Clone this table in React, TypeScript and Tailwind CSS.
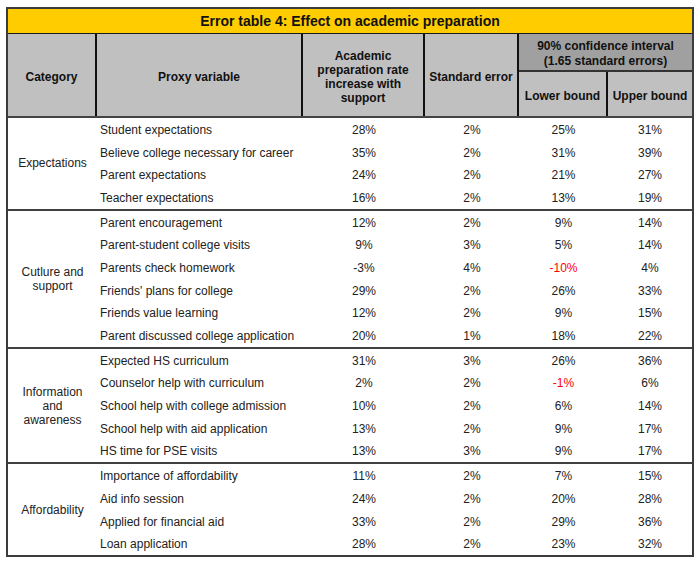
import React from "react";

type Row = { label: string; a: string; se: string; lo: string; hi: string; red?: boolean };
type Group = { cat: string; rows: Row[] };

const groups: Group[] = [
  {
    cat: "Expectations",
    rows: [
      { label: "Student expectations", a: "28%", se: "2%", lo: "25%", hi: "31%" },
      { label: "Believe college necessary for career", a: "35%", se: "2%", lo: "31%", hi: "39%" },
      { label: "Parent expectations", a: "24%", se: "2%", lo: "21%", hi: "27%" },
      { label: "Teacher expectations", a: "16%", se: "2%", lo: "13%", hi: "19%" },
    ],
  },
  {
    cat: "Cutlure and support",
    rows: [
      { label: "Parent encouragement", a: "12%", se: "2%", lo: "9%", hi: "14%" },
      { label: "Parent-student college visits", a: "9%", se: "3%", lo: "5%", hi: "14%" },
      { label: "Parents check homework", a: "-3%", se: "4%", lo: "-10%", hi: "4%", red: true },
      { label: "Friends' plans for college", a: "29%", se: "2%", lo: "26%", hi: "33%" },
      { label: "Friends value learning", a: "12%", se: "2%", lo: "9%", hi: "15%" },
      { label: "Parent discussed college application", a: "20%", se: "1%", lo: "18%", hi: "22%" },
    ],
  },
  {
    cat: "Information and awareness",
    rows: [
      { label: "Expected HS curriculum", a: "31%", se: "3%", lo: "26%", hi: "36%" },
      { label: "Counselor help with curriculum", a: "2%", se: "2%", lo: "-1%", hi: "6%", red: true },
      { label: "School help with college admission", a: "10%", se: "2%", lo: "6%", hi: "14%" },
      { label: "School help with aid application", a: "13%", se: "2%", lo: "9%", hi: "17%" },
      { label: "HS time for PSE visits", a: "13%", se: "3%", lo: "9%", hi: "17%" },
    ],
  },
  {
    cat: "Affordability",
    rows: [
      { label: "Importance of affordability", a: "11%", se: "2%", lo: "7%", hi: "15%" },
      { label: "Aid info session", a: "24%", se: "2%", lo: "20%", hi: "28%" },
      { label: "Applied for financial aid", a: "33%", se: "2%", lo: "29%", hi: "36%" },
      { label: "Loan application", a: "28%", se: "2%", lo: "23%", hi: "32%" },
    ],
  },
];

export default function App() {
  return (
    <div
      className="min-h-[562px] w-[700px] bg-white pt-[7px] pl-[6px]"
      style={{ fontFamily: '"Liberation Sans", Arial, sans-serif' }}
    >
      <div className="w-[688px] border-2 border-[#3c3c3c]">
        <div className="flex h-[25px] items-center justify-center border-b border-[#1a1a1a] bg-[#ffcc00] pt-[1px] text-[14px] font-bold text-[#111]">
          Error table 4: Effect on academic preparation
        </div>
        <div className="flex h-[84px] border-b-2 border-[#444] bg-[#c0c0c0] text-[12px] font-bold leading-[14px] text-[#111]">
          <div className="flex w-[89px] items-center justify-center border-r-2 border-[#111] pt-[4px]">Category</div>
          <div className="flex w-[206px] items-center justify-center border-r-2 border-[#111] pt-[4px]">Proxy variable</div>
          <div className="flex w-[122px] items-center justify-center border-r-2 border-[#111] px-[6px] pt-[4px] text-center">
            Academic preparation rate increase with support
          </div>
          <div className="flex w-[94px] items-center justify-center border-r-2 border-[#111] pt-[4px]">Standard error</div>
          <div className="flex w-[173px] flex-col">
            <div className="flex h-[38px] items-center justify-center border-b-2 border-[#333] bg-[#a0a0a0] pt-[4px] text-center leading-[15px]">
              90% confidence interval
              <br />
              (1.65 standard errors)
            </div>
            <div className="flex flex-1">
              <div className="flex w-[89px] items-center justify-center border-r-2 border-[#111] pt-[3px]">Lower bound</div>
              <div className="flex flex-1 items-center justify-center pt-[3px]">Upper bound</div>
            </div>
          </div>
        </div>
        {groups.map((g, gi) => (
          <div
            key={g.cat}
            className={`flex text-[12px] text-[#222] ${gi > 0 ? "border-t-2 border-[#404040]" : ""}`}
          >
            <div className="flex w-[89px] items-center justify-center px-[6px] text-center leading-[14px]">
              {g.cat}
            </div>
            <div className="flex flex-1 flex-col">
              {g.rows.map((r) => (
                <div key={r.label} className="flex h-[22.7px] items-center pt-[1px]">
                  <div className="w-[206px] pl-[3px]">{r.label}</div>
                  <div className="w-[122px] text-center">{r.a}</div>
                  <div className="w-[94px] text-center">{r.se}</div>
                  <div className={`w-[89px] text-center ${r.red ? "text-[#ff0000]" : ""}`}>{r.lo}</div>
                  <div className="flex-1 text-center">{r.hi}</div>
                </div>
              ))}
            </div>
          </div>
        ))}
      </div>
    </div>
  );
}
